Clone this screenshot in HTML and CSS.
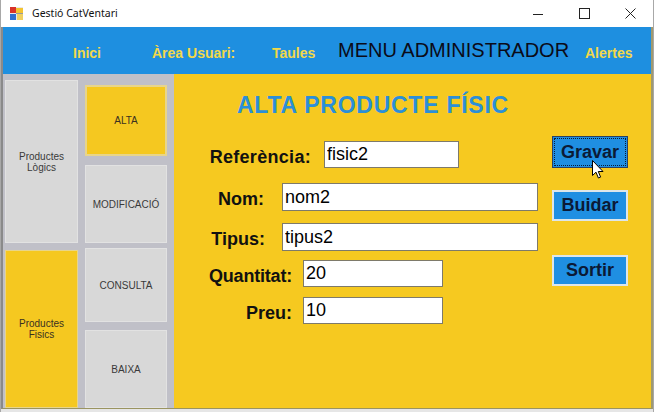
FILE: index.html
```html
<!DOCTYPE html>
<html lang="ca">
<head>
<meta charset="utf-8">
<title>Gestió CatVentari</title>
<link rel="stylesheet" href="styles.css">
</head>
<body>
<div class="window">
  <div class="titlebar">
    <svg class="appicon" width="13" height="13" viewBox="0 0 13 13">
      <rect x="0" y="0" width="13" height="13" fill="#e8e8e8"/>
      <rect x="0" y="0" width="6" height="6" fill="#d8322a"/>
      <rect x="6" y="1" width="7" height="5" fill="#f4c430"/>
      <rect x="0" y="7" width="6" height="6" fill="#2f6fd0"/>
      <rect x="7" y="7" width="6" height="6" fill="#f0d060"/>
      <rect x="6" y="6" width="7" height="1" fill="#9a9a9a"/>
    </svg>
    <span class="wtitle">Gestió CatVentari</span>
    <div class="controls">
      <div class="ctl"><svg width="10" height="10" viewBox="0 0 10 10"><line x1="0" y1="5.5" x2="10" y2="5.5" stroke="#222" stroke-width="1"/></svg></div>
      <div class="ctl"><svg width="11" height="11" viewBox="0 0 11 11"><rect x="0.5" y="0.5" width="10" height="10" fill="none" stroke="#222" stroke-width="1"/></svg></div>
      <div class="ctl"><svg width="11" height="11" viewBox="0 0 11 11"><path d="M0.5 0.5 L10.5 10.5 M10.5 0.5 L0.5 10.5" stroke="#222" stroke-width="1"/></svg></div>
    </div>
  </div>
  <div class="client">
    <nav class="menubar">
      <span class="mi mi-inici">Inici</span>
      <span class="mi mi-area">Àrea Usuari:</span>
      <span class="mi mi-taules">Taules</span>
      <span class="mi-admin">MENU ADMINISTRADOR</span>
      <span class="mi mi-alertes">Alertes</span>
    </nav>
    <div class="workspace">
      <aside class="sidebar">
        <div class="col col-cat">
          <div class="tile tile-logics">Productes<br>Lògics</div>
          <div class="tile tile-fisics active">Productes<br>Fisics</div>
        </div>
        <div class="col col-act">
          <div class="tile t-alta active">ALTA</div>
          <div class="tile t-mod">MODIFICACIÓ</div>
          <div class="tile t-cons">CONSULTA</div>
          <div class="tile t-baixa">BAIXA</div>
        </div>
      </aside>
      <main class="main">
        <h1 class="heading">ALTA PRODUCTE FÍSIC</h1>
        <div class="formarea">
          <div class="form">
            <div class="row r1">
              <label class="lbl">Referència:</label>
              <input class="field" type="text" value="fisic2">
            </div>
            <div class="row r2">
              <label class="lbl">Nom:</label>
              <input class="field" type="text" value="nom2">
            </div>
            <div class="row r3">
              <label class="lbl">Tipus:</label>
              <input class="field" type="text" value="tipus2">
            </div>
            <div class="row r4">
              <label class="lbl">Quantitat:</label>
              <input class="field" type="text" value="20">
            </div>
            <div class="row r5">
              <label class="lbl">Preu:</label>
              <input class="field" type="text" value="10">
            </div>
          </div>
          <div class="buttons">
            <button class="btn btn-focus">Gravar</button>
            <button class="btn btn-buidar">Buidar</button>
            <button class="btn btn-sortir">Sortir</button>
          </div>
        </div>
        <svg class="cursor" width="12" height="19" viewBox="0 0 12 19">
          <path d="M0.5 0.5 L0.5 15.5 L4 12.2 L6.4 18 L8.6 17.1 L6.3 11.5 L11 11.5 Z" fill="#fff" stroke="#000" stroke-width="1" stroke-linejoin="round"/>
        </svg>
      </main>
    </div>
  </div>
</div>
</body>
</html>
```
FILE: styles.css
```css
* { box-sizing: border-box; }
html, body {
  margin: 0;
  padding: 0;
  width: 654px;
  height: 412px;
  overflow: hidden;
  background: #ececec;
  font-family: "Liberation Sans", Arial, sans-serif;
}
.window {
  width: 654px;
  height: 412px;
  border-left: 1px solid #a8a8a8;
  border-right: 1px solid #a8a8a8;
  background: #e6e6e6;
  display: flex;
  flex-direction: column;
}
.titlebar {
  height: 27px;
  background: #fff;
  display: flex;
  align-items: center;
  flex: none;
}
.appicon { margin-left: 9px; flex: none; }
.wtitle {
  margin-left: 9px;
  font-family: "Noto Sans", "Open Sans", sans-serif;
  font-size: 10.5px;
  color: #111;
  line-height: 1;
}
.controls {
  margin-left: auto;
  display: flex;
  height: 27px;
}
.ctl {
  width: 46px;
  height: 27px;
  display: flex;
  align-items: center;
  justify-content: center;
}
.client {
  height: 382px;
  flex: none;
  border-left: 2px solid #8a8a8a;
  border-right: 2px solid #a09a70;
  border-bottom: 1px solid #9a9460;
  display: flex;
  flex-direction: column;
}
.menubar {
  height: 47px;
  flex: none;
  background: #1e8fe0;
  display: flex;
  align-items: center;
  white-space: nowrap;
}
.mi {
  font-size: 14px;
  font-weight: bold;
  color: #f2d84a;
  padding-top: 4px;
  display: block;
  flex: none;
}
.mi-inici { margin-left: 70px; width: 79px; }
.mi-area { width: 85px; overflow: hidden; margin-right: 35px; }
.mi-taules { width: 66px; }
.mi-admin {
  font-size: 20px;
  color: #0b0b18;
  width: 247px;
  flex: none;
}
.workspace {
  flex: 1;
  display: flex;
  min-height: 0;
}
.sidebar {
  width: 171px;
  flex: none;
  background: #c0c0c8;
  display: flex;
  padding: 6px 0 0 2px;
}
.col {
  display: flex;
  flex-direction: column;
}
.col-cat { width: 73px; margin-right: 7px; }
.col-act { width: 82px; }
.tile {
  background: #d8d8d8;
  border: 1px solid #e2e2e2;
  display: flex;
  align-items: center;
  justify-content: center;
  text-align: center;
  font-size: 10px;
  line-height: 11px;
  color: #3a3a3a;
}
.tile.active {
  background: #f5c820;
  border-color: #e8d58a;
  color: #3a3020;
}
.tile-logics { height: 163px; }
.tile-fisics { margin-top: 7px; flex: 1; }
.t-alta { margin-top: 5px; height: 71px; border-width: 2px; }
.t-mod { margin-top: 9px; height: 78px; }
.t-cons { margin-top: 5px; height: 74px; }
.t-baixa { margin-top: 8px; flex: 1; }
.main {
  flex: 1;
  background: #f6c920;
  position: relative;
  padding-top: 20px;
}
.heading {
  margin: 0 0 0 63px;
  font-size: 23px;
  line-height: 23px;
  font-weight: bold;
  letter-spacing: 0.75px;
  color: #2b8fd8;
}
.formarea {
  display: flex;
  margin-top: 19px;
}
.form {
  width: 378px;
  padding-top: 5px;
  display: flex;
  flex-direction: column;
}
.row {
  display: flex;
  align-items: flex-start;
}
.lbl {
  font-size: 18px;
  font-weight: bold;
  color: #111;
  text-align: right;
  margin-top: 6px;
  white-space: nowrap;
}
.field {
  font-family: "Liberation Sans", Arial, sans-serif;
  font-size: 18px;
  color: #000;
  background: #fff;
  border: 1px solid #7e7a6a;
  padding: 0 2px;
  height: 27px;
  margin: 0;
  outline: none;
}
.r1 .lbl { width: 137px; letter-spacing: 0.3px; }
.r1 .field { margin-left: 13px; width: 135px; }
.r2 { margin-top: 15px; }
.r2 .lbl { width: 90px; }
.r2 .field { margin-left: 18px; width: 256px; height: 28px; }
.r3 { margin-top: 12px; }
.r3 .lbl { width: 91px; }
.r3 .field { margin-left: 17px; width: 256px; height: 28px; }
.r4 { margin-top: 9px; }
.r4 .lbl { width: 118px; letter-spacing: -0.2px; }
.r4 .field { margin-left: 11px; width: 140px; }
.r5 { margin-top: 10px; }
.r5 .lbl { width: 118px; }
.r5 .field { margin-left: 11px; width: 140px; }
.buttons {
  width: 76px;
  display: flex;
  flex-direction: column;
}
.btn {
  font-family: "Liberation Sans", Arial, sans-serif;
  font-size: 18px;
  font-weight: bold;
  color: #0b1a36;
  background: #1f8fe2;
  border: 2px solid #dde6ea;
  height: 31px;
  width: 76px;
  padding: 0;
  margin: 0;
}
.btn-focus {
  height: 32px;
  border: 1px solid #2a4060;
  outline: 1px dotted #0a1a33;
  outline-offset: -3px;
}
.btn-buidar { margin-top: 22px; }
.btn-sortir { margin-top: 34px; }
.cursor {
  position: absolute;
  left: 418px;
  top: 86px;
}
```
